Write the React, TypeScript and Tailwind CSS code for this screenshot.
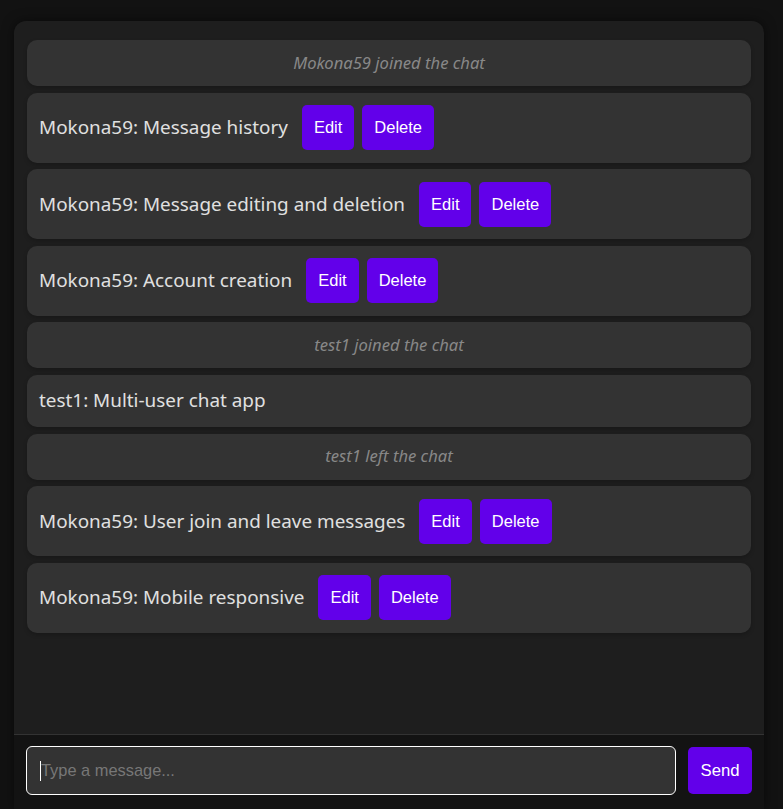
import React from "react";

type Msg = { system?: boolean; text: string; own?: boolean };

const messages: Msg[] = [
  { system: true, text: "Mokona59 joined the chat" },
  { text: "Mokona59: Message history", own: true },
  { text: "Mokona59: Message editing and deletion", own: true },
  { text: "Mokona59: Account creation", own: true },
  { system: true, text: "test1 joined the chat" },
  { text: "test1: Multi-user chat app" },
  { system: true, text: "test1 left the chat" },
  { text: "Mokona59: User join and leave messages", own: true },
  { text: "Mokona59: Mobile responsive", own: true },
];

const btn =
  "h-[45px] px-3 rounded-[5px] bg-[#6200ea] text-white text-[16.5px] font-['Liberation_Sans',Arial,sans-serif]";

const App = () => {
  return (
    <div className="min-h-screen bg-[#121212] pt-[21px] pl-[14px] overflow-hidden">
      <div className="w-[750px] rounded-t-[12px] bg-[#1e1e1e] shadow-[0_0_12px_rgba(0,0,0,0.5)] flex flex-col">
        <div className="h-[713px] px-[13px] pt-[19px] flex flex-col gap-[6.6px] overflow-y-auto">
          {messages.map((m, i) =>
            m.system ? (
              <div
                key={i}
                className="h-[46px] shrink-0 rounded-[10px] bg-[#333] shadow-[0_2px_4px_rgba(0,0,0,0.2)] flex items-center justify-center italic text-[16.6px] text-[#888] font-['Noto_Sans',sans-serif]"
              >
                {m.text}
              </div>
            ) : (
              <div
                key={i}
                className={`${m.own ? "h-[70px]" : "h-[52px]"} shrink-0 rounded-[10px] bg-[#333] shadow-[0_2px_4px_rgba(0,0,0,0.2)] px-3 flex items-center`}
              >
                <span className="text-[18.9px] leading-[26px] -mt-px text-[#e0e0e0] font-['Noto_Sans',sans-serif]">
                  {m.text}
                </span>
                {m.own && (
                  <div className="ml-[14px] flex gap-2">
                    <button className={btn}>Edit</button>
                    <button className={btn}>Delete</button>
                  </div>
                )}
              </div>
            )
          )}
        </div>
        <div className="border-t border-[#333] bg-[#131313] px-3 pt-[11px] pb-[14px] flex items-center gap-3">
          <div className="flex-1 h-[49px] rounded-[6px] border border-white bg-[#333] flex items-center pl-[13px]">
            <span className="w-px h-[20px] bg-white" />
            <span className="text-[16.4px] text-[#777] font-['Liberation_Sans',Arial,sans-serif]">
              Type a message...
            </span>
          </div>
          <button className="h-[47px] w-[64px] rounded-[5px] bg-[#6200ea] text-white text-[16.7px] font-['Liberation_Sans',Arial,sans-serif]">
            Send
          </button>
        </div>
      </div>
    </div>
  );
};

export default App;
